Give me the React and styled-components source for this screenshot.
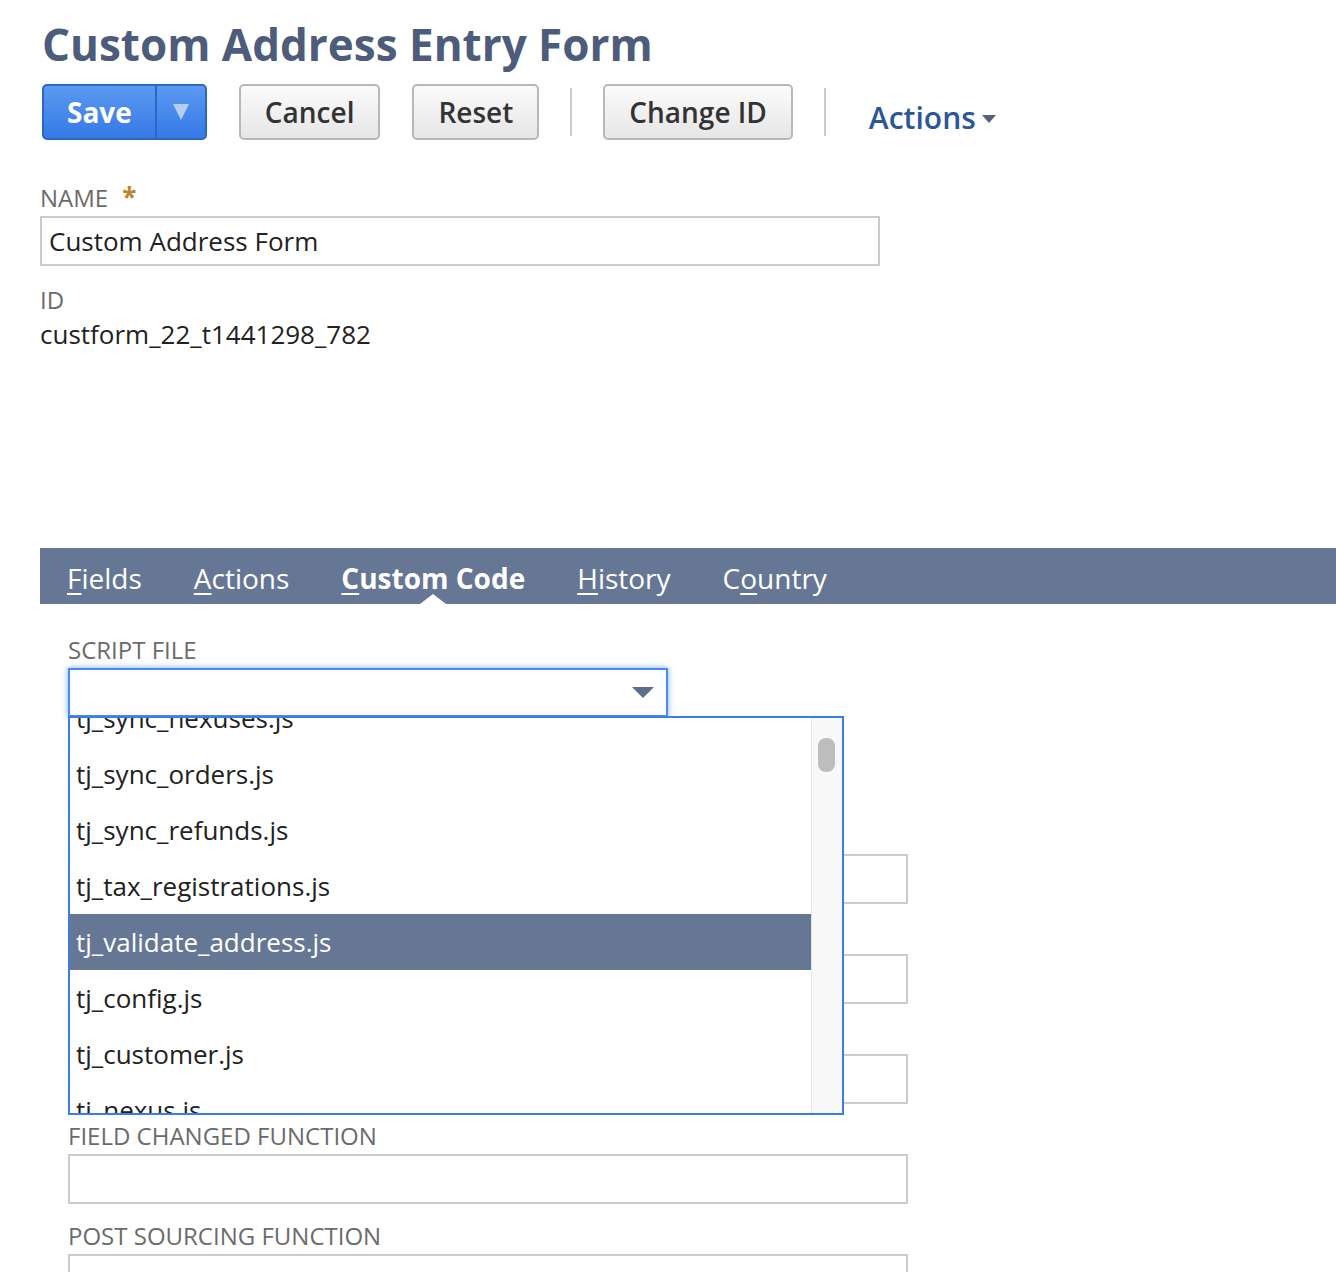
import React from 'react';
import styled, { createGlobalStyle, css } from 'styled-components';

const GlobalStyle = createGlobalStyle`
  html, body {
    margin: 0;
    padding: 0;
    background: #ffffff;
  }
  body {
    font-family: "Open Sans", "Noto Sans", sans-serif;
    color: #222222;
  }
`;

const Page = styled.div`
  width: 1336px;
  height: 1272px;
  overflow: hidden;
  padding-left: 40px;
  box-sizing: border-box;
`;

const Title = styled.h1`
  margin: 0;
  padding: 14px 0 0 2px;
  font-size: 44px;
  line-height: 60px;
  font-weight: 700;
  color: #4d5c7a;
`;

const Toolbar = styled.div`
  display: flex;
  align-items: center;
  gap: 32px;
  margin-top: 10px;
  padding-left: 2px;
  height: 56px;
`;

const Button = styled.button`
  height: 56px;
  padding: 0 24px;
  font-family: inherit;
  font-size: 28px;
  font-weight: 600;
  color: #333333;
  background: linear-gradient(#fbfbfb, #e6e6e6);
  border: 2px solid #b8b8b8;
  border-radius: 5px;
  box-sizing: border-box;
  cursor: pointer;
`;

const SplitButton = styled.div`
  display: flex;
  height: 56px;
  border: 2px solid #2c67c8;
  border-radius: 5px;
  box-sizing: border-box;
  overflow: hidden;
  background: linear-gradient(#5a9af1, #3679e6);
`;

const SplitMain = styled.span`
  display: flex;
  align-items: center;
  padding: 0 23px;
  font-size: 28px;
  font-weight: 700;
  color: #ffffff;
  border-right: 2px solid #2c67c8;
`;

const SplitArrow = styled.span`
  display: flex;
  align-items: center;
  justify-content: center;
  width: 48px;
  &::after {
    content: '';
    border-left: 8px solid transparent;
    border-right: 8px solid transparent;
    border-top: 16px solid #b7cdf2;
  }
`;

const Divider = styled.span`
  width: 2px;
  height: 48px;
  margin: 0 -1px;
  background: #cbcbcb;
`;

const ActionsLink = styled.a`
  display: flex;
  align-items: center;
  gap: 6px;
  padding-left: 12px;
  margin-top: 10px;
  font-size: 30px;
  font-weight: 600;
  color: #2b5797;
  text-decoration: none;
  &::after {
    content: '';
    margin-top: 4px;
    border-left: 7px solid transparent;
    border-right: 7px solid transparent;
    border-top: 8px solid #56627c;
  }
`;

const Field = styled.div`
  position: relative;
  display: flex;
  flex-direction: column;
  width: 840px;
  margin-top: ${p => p.$top || 0}px;
`;

const Label = styled.div`
  font-size: 24px;
  line-height: 28px;
  height: 28px;
  margin-bottom: 4px;
  color: #6b6b6b;
  text-transform: uppercase;
  display: flex;
  gap: 14px;
`;

const Required = styled.span`
  color: #c0822c;
  font-weight: 700;
  font-size: 26px;
  line-height: 26px;
`;

const TextInput = styled.div`
  height: 50px;
  border: 2px solid #cccccc;
  box-sizing: border-box;
  font-size: 26px;
  line-height: 46px;
  padding-left: 7px;
  color: #222222;
  background: #ffffff;
`;

const Value = styled.div`
  font-size: 26px;
  line-height: 32px;
  color: #222222;
`;

const TabBar = styled.div`
  display: flex;
  align-items: center;
  height: 56px;
  margin-top: 198px;
  padding-left: 1px;
  background: #657795;
`;

const Tab = styled.div`
  position: relative;
  padding: 4px 26px 0;
  box-sizing: border-box;
  font-size: 28px;
  color: #ffffff;
  font-weight: ${p => (p.$active ? 700 : 400)};
  height: 56px;
  line-height: 52px;
  u {
    text-decoration-thickness: 2px;
    text-underline-offset: 4px;
  }
  ${p =>
    p.$active &&
    css`
      &::after {
        content: '';
        position: absolute;
        bottom: 0;
        left: 50%;
        margin-left: -13px;
        border-left: 13px solid transparent;
        border-right: 13px solid transparent;
        border-bottom: 10px solid #ffffff;
      }
    `}
`;

const TabBody = styled.div`
  padding: 32px 0 0 28px;
`;

const Select = styled.div`
  width: 600px;
  height: 49px;
  border: 2px solid #4a8be9;
  box-shadow: 0 0 6px rgba(74, 139, 233, 0.75);
  box-sizing: border-box;
  background: #ffffff;
  display: flex;
  align-items: center;
  justify-content: flex-end;
  padding-right: 12px;
  &::after {
    content: '';
    border-left: 11px solid transparent;
    border-right: 11px solid transparent;
    border-top: 11px solid #5d6e8d;
  }
`;

const DropList = styled.div`
  position: absolute;
  top: 80px;
  left: 0;
  z-index: 10;
  width: 776px;
  height: 399px;
  border: 2px solid #3b7de6;
  box-sizing: border-box;
  background: #ffffff;
  display: flex;
  overflow: hidden;
`;

const Options = styled.div`
  flex: 1;
  overflow: hidden;
`;

const OptionsInner = styled.div`
  margin-top: -28px;
`;

const Option = styled.div`
  height: 56px;
  line-height: 56px;
  padding-left: 6px;
  font-size: 26px;
  white-space: nowrap;
  color: ${p => (p.$selected ? '#ffffff' : '#222222')};
  background: ${p => (p.$selected ? '#657795' : 'transparent')};
`;

const Scrollbar = styled.div`
  position: relative;
  width: 30px;
  background: #f8f8f8;
  border-left: 1px solid #e4e4e4;
`;

const Thumb = styled.div`
  position: absolute;
  top: 20px;
  left: 6px;
  width: 17px;
  height: 34px;
  border-radius: 8px;
  background: #bdbdbd;
`;

const scripts = [
  'tj_sync_nexuses.js',
  'tj_sync_orders.js',
  'tj_sync_refunds.js',
  'tj_tax_registrations.js',
  'tj_validate_address.js',
  'tj_config.js',
  'tj_customer.js',
  'tj_nexus.js',
];

const functionFields = [
  { label: 'Page Init Function', top: 105 },
  { label: 'Save Record Function', top: 18 },
  { label: 'Validate Field Function', top: 18 },
  { label: 'Field Changed Function', top: 18 },
  { label: 'Post Sourcing Function', top: 18 },
];

const App = () => (
  <Page>
    <GlobalStyle />
    <Title>Custom Address Entry Form</Title>
    <Toolbar>
      <SplitButton>
        <SplitMain>Save</SplitMain>
        <SplitArrow />
      </SplitButton>
      <Button>Cancel</Button>
      <Button>Reset</Button>
      <Divider />
      <Button>Change ID</Button>
      <Divider />
      <ActionsLink>Actions</ActionsLink>
    </Toolbar>

    <Field $top={44}>
      <Label>
        Name <Required>*</Required>
      </Label>
      <TextInput>Custom Address Form</TextInput>
    </Field>
    <Field $top={20}>
      <Label>ID</Label>
      <Value>custform_22_t1441298_782</Value>
    </Field>

    <TabBar>
      <Tab><u>F</u>ields</Tab>
      <Tab><u>A</u>ctions</Tab>
      <Tab $active><u>C</u>ustom Code</Tab>
      <Tab><u>H</u>istory</Tab>
      <Tab>C<u>o</u>untry</Tab>
    </TabBar>

    <TabBody>
      <Field>
        <Label>Script File</Label>
        <Select />
        <DropList>
          <Options>
            <OptionsInner>
              {scripts.map(name => (
                <Option key={name} $selected={name === 'tj_validate_address.js'}>
                  {name}
                </Option>
              ))}
            </OptionsInner>
          </Options>
          <Scrollbar>
            <Thumb />
          </Scrollbar>
        </DropList>
      </Field>
      {functionFields.map(f => (
        <Field key={f.label} $top={f.top}>
          <Label>{f.label}</Label>
          <TextInput />
        </Field>
      ))}
    </TabBody>
  </Page>
);

export default App;
